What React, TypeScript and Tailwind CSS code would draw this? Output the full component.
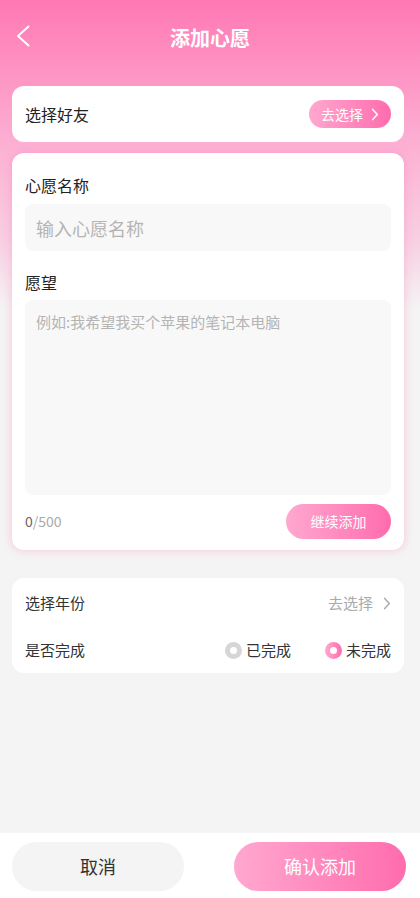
import { useState } from "react";

const FONT = "font-['Noto_Sans_CJK_SC','Noto_Sans',sans-serif]";
const PINK = "bg-[linear-gradient(90deg,#ffa8cf,#ff6cae)]";

function Chevron({ className = "" }: { className?: string }) {
  return (
    <svg viewBox="0 0 8 14" className={className} fill="none">
      <polyline points="1.5,1.5 6.5,7 1.5,12.5" stroke="currentColor" strokeWidth="1.6" strokeLinecap="round" strokeLinejoin="round" />
    </svg>
  );
}

function Radio({ label, checked, onClick }: { label: string; checked: boolean; onClick: () => void }) {
  return (
    <button onClick={onClick} className="flex items-center gap-[4px]">
      <span
        className={`w-[17px] h-[17px] rounded-full flex items-center justify-center ${checked ? PINK : "bg-[#d6d6d6]"}`}
      >
        <span className="w-[7px] h-[7px] rounded-full bg-white" />
      </span>
      <span className="text-[15px] text-[#333]">{label}</span>
    </button>
  );
}

export default function App() {
  const [done, setDone] = useState(false);
  const [wish, setWish] = useState("");

  return (
    <div
      className={`${FONT} min-h-[898px] flex flex-col bg-[linear-gradient(180deg,#ff78b4_0px,#fcb2d4_150px,#f8cfe2_240px,#f4f4f4_310px)]`}
    >
      <header className="relative h-[76px] flex items-center justify-center">
        <button className="absolute left-[16px] top-[25px] text-white" aria-label="back">
          <svg viewBox="0 0 14 22" className="w-[14px] h-[22px]" fill="none">
            <polyline points="12.5,1.5 2,11 12.5,20.5" stroke="currentColor" strokeWidth="2" strokeLinecap="round" strokeLinejoin="round" />
          </svg>
        </button>
        <h1 className="text-white text-[20px] font-semibold">添加心愿</h1>
      </header>

      <main className="pl-3 pr-4 mt-[10px] flex flex-col">
        <div className="h-[56px] bg-white rounded-xl pl-[13px] pr-[13px] flex items-center justify-between">
          <span className="text-[16px] text-[#222]">选择好友</span>
          <button className={`${PINK} h-[28px] w-[82px] rounded-full flex items-center justify-center gap-[8px] text-white text-[14px]`}>
            去选择
            <Chevron className="w-[8px] h-[13px]" />
          </button>
        </div>

        <div className="mt-[11px] bg-white rounded-xl px-[13px] pt-[21px] pb-[11px] shadow-[0_0_10px_rgba(255,120,180,0.4)]">
          <div className="text-[16px] text-[#222] leading-[22px]">心愿名称</div>
          <input
            placeholder="输入心愿名称"
            className="mt-[8px] w-full h-[47px] rounded-lg bg-[#f8f8f8] px-[11px] text-[18px] text-[#333] placeholder:text-[#b4b4b4] outline-none"
          />
          <div className="mt-[20px] text-[16px] text-[#222] leading-[22px]">愿望</div>
          <textarea
            value={wish}
            onChange={(e) => setWish(e.target.value.slice(0, 500))}
            placeholder="例如:我希望我买个苹果的笔记本电脑"
            className="mt-[7px] w-full h-[195px] block resize-none rounded-lg bg-[#f8f8f8] px-[11px] py-[11px] text-[15px] leading-[22px] text-[#333] placeholder:text-[#b4b4b4] outline-none"
          />
          <div className="mt-[9px] flex items-center justify-between">
            <span className="text-[14px]">
              <span className="text-[#666]">{wish.length}</span>
              <span className="text-[#aaa]">/500</span>
            </span>
            <button className={`${PINK} h-[35px] w-[105px] rounded-full text-white text-[14px]`}>继续添加</button>
          </div>
        </div>

        <div className="mt-[28px] bg-white rounded-xl px-[13px]">
          <div className="h-[50px] flex items-center justify-between">
            <span className="text-[15px] text-[#333]">选择年份</span>
            <button className="flex items-center gap-[10px] text-[15px] text-[#aaa]">
              去选择
              <Chevron className="w-[8px] h-[13px]" />
            </button>
          </div>
          <div className="h-[45px] flex items-center justify-between">
            <span className="text-[15px] text-[#333]">是否完成</span>
            <div className="flex items-center gap-[34px]">
              <Radio label="已完成" checked={done} onClick={() => setDone(true)} />
              <Radio label="未完成" checked={!done} onClick={() => setDone(false)} />
            </div>
          </div>
        </div>
      </main>

      <div className="flex-1" />

      <footer className="h-[65px] bg-white pl-3 pr-[14px] pt-[9px] flex justify-between">
        <button className="w-[172px] h-[49px] rounded-full bg-[#f4f4f4] text-[18px] text-[#333]">取消</button>
        <button className={`${PINK} w-[172px] h-[49px] rounded-full text-[18px] text-white`}>确认添加</button>
      </footer>
    </div>
  );
}
